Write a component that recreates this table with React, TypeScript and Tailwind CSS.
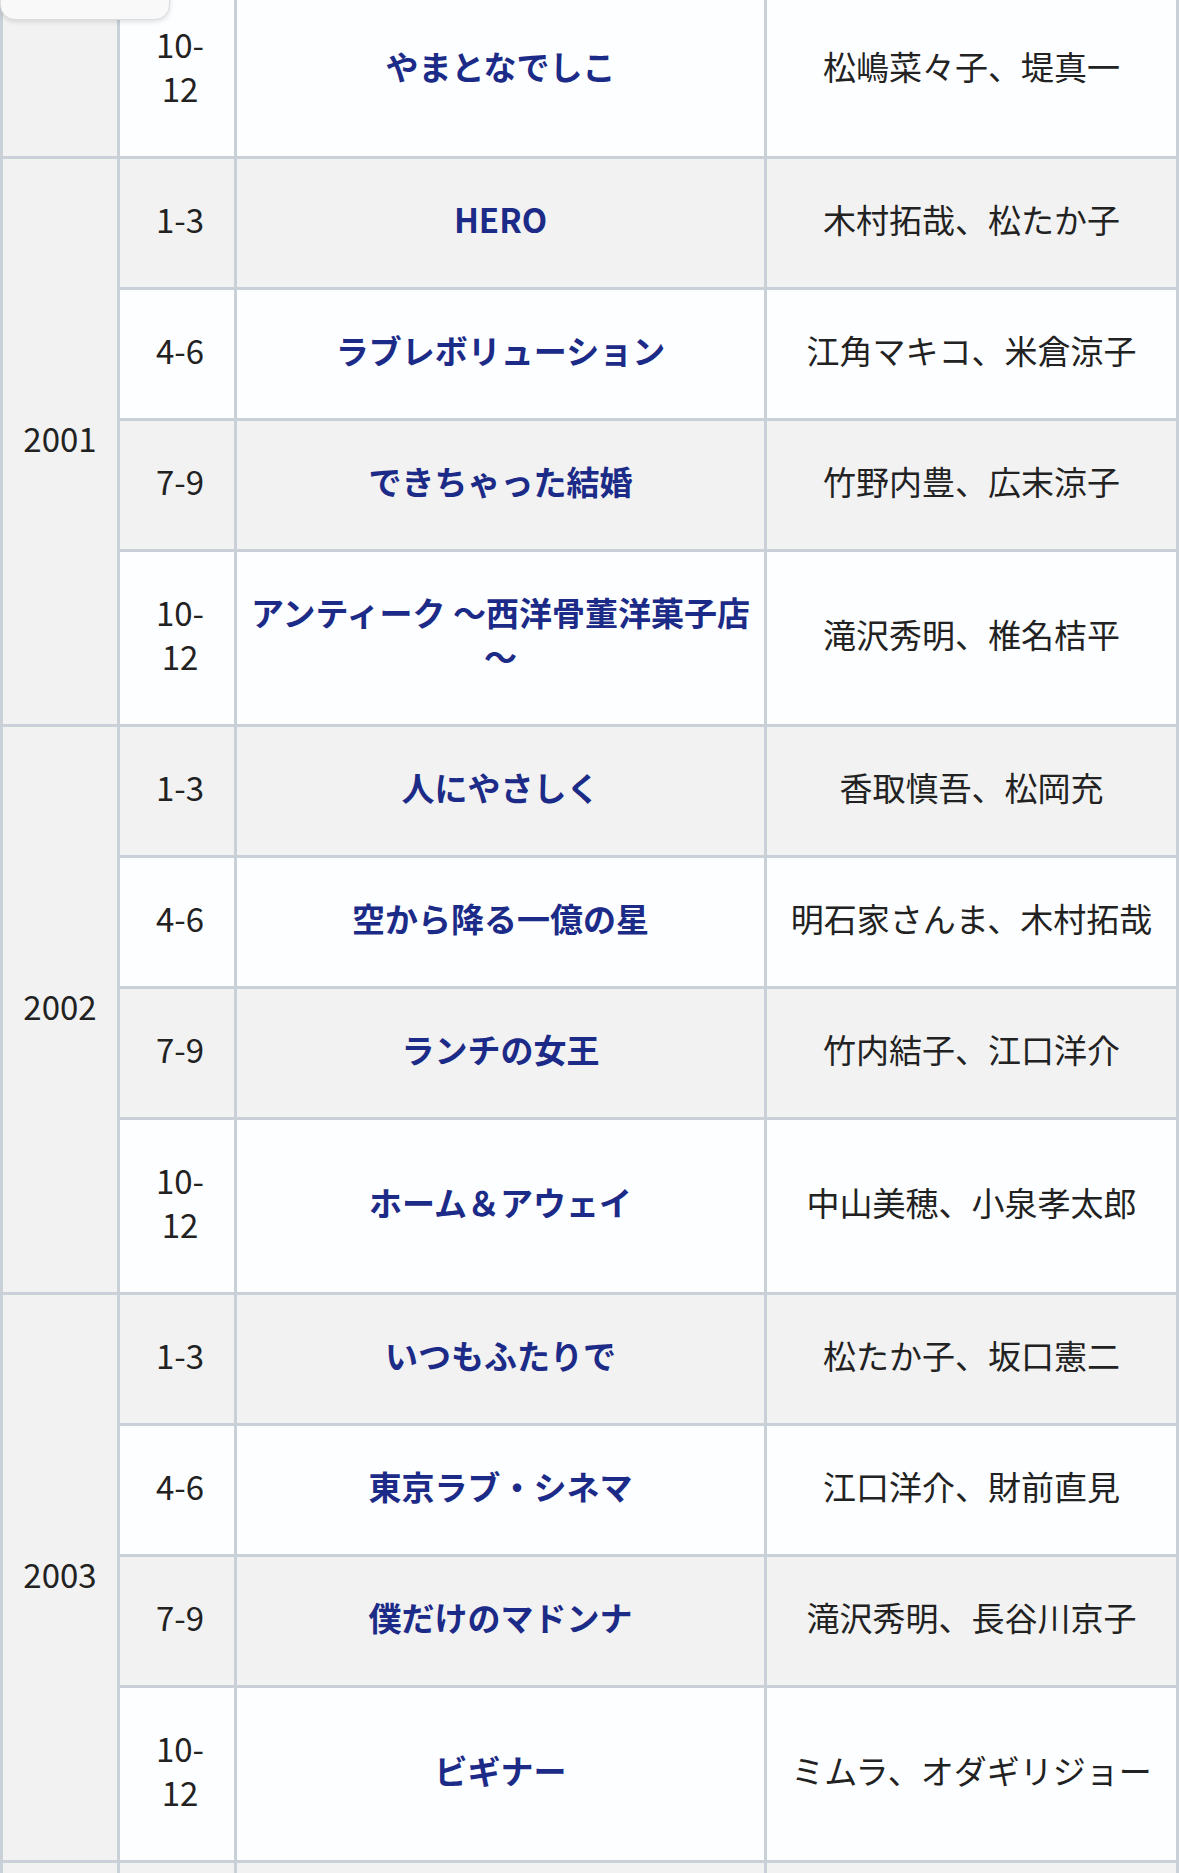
import React from "react";

type Row = { m: string; title: React.ReactNode; cast: string; two?: boolean };

const groups: { year: string; rows: Row[] }[] = [
  {
    year: "2001",
    rows: [
      { m: "1-3", title: "HERO", cast: "木村拓哉、松たか子" },
      { m: "4-6", title: "ラブレボリューション", cast: "江角マキコ、米倉涼子" },
      { m: "7-9", title: "できちゃった結婚", cast: "竹野内豊、広末涼子" },
      {
        m: "10-12",
        title: (
          <>
            アンティーク ～西洋骨董洋菓子店
            <br />～
          </>
        ),
        cast: "滝沢秀明、椎名桔平",
        two: true,
      },
    ],
  },
  {
    year: "2002",
    rows: [
      { m: "1-3", title: "人にやさしく", cast: "香取慎吾、松岡充" },
      { m: "4-6", title: "空から降る一億の星", cast: "明石家さんま、木村拓哉" },
      { m: "7-9", title: "ランチの女王", cast: "竹内結子、江口洋介" },
      { m: "10-12", title: "ホーム＆アウェイ", cast: "中山美穂、小泉孝太郎", two: true },
    ],
  },
  {
    year: "2003",
    rows: [
      { m: "1-3", title: "いつもふたりで", cast: "松たか子、坂口憲二" },
      { m: "4-6", title: "東京ラブ・シネマ", cast: "江口洋介、財前直見" },
      { m: "7-9", title: "僕だけのマドンナ", cast: "滝沢秀明、長谷川京子" },
      { m: "10-12", title: "ビギナー", cast: "ミムラ、オダギリジョー", two: true },
    ],
  },
];

const cellBase =
  "border-[3px] border-[#c9d0d7] text-center align-middle pb-[46px] leading-[44px]";
const firstRow = `${cellBase} border-t-0 pt-[22px]`;
const normal = `${cellBase} pt-[38px]`;

function Month({ m }: { m: string }) {
  if (m === "10-12")
    return (
      <>
        10-
        <br />
        12
      </>
    );
  return <>{m}</>;
}

export default function App() {
  return (
    <div
      className="relative w-[1179px] h-[1873px] overflow-hidden bg-white text-[#222222]"
      style={{ fontFamily: '"Noto Sans CJK JP", "Noto Sans", sans-serif' }}
    >
      <table className="table-fixed border-collapse w-[1179px] text-[33px]">
        <colgroup>
          <col className="w-[117px]" />
          <col className="w-[117px]" />
          <col className="w-[530px]" />
          <col className="w-[412px]" />
        </colgroup>
        <tbody>
          <tr className="bg-[#fdfeff]">
            <td className={`${firstRow} bg-[#f2f2f2]`}></td>
            <td className={`${firstRow} pl-[6px]`}>
              <Month m="10-12" />
            </td>
            <td className={`${firstRow} px-[8px] font-bold text-[#1c2b87]`}>やまとなでしこ</td>
            <td className={`${firstRow} px-[8px]`}>松嶋菜々子、堤真一</td>
          </tr>
          {groups.map((g) =>
            g.rows.map((r, i) => {
              const gray = i % 2 === 0;
              return (
                <tr key={g.year + r.m} className={gray ? "bg-[#f2f2f2]" : "bg-[#fdfeff]"}>
                  {i === 0 && (
                    <td rowSpan={4} className={`${normal} bg-[#f2f2f2] px-[4px]`}>
                      {g.year}
                    </td>
                  )}
                  <td className={`${normal} pl-[6px]`}>
                    <Month m={r.m} />
                  </td>
                  <td className={`${normal} px-[8px] font-bold text-[#1c2b87]`}>{r.title}</td>
                  <td className={`${normal} px-[8px]`}>{r.cast}</td>
                </tr>
              );
            })
          )}
          <tr className="bg-[#f2f2f2]">
            <td className={`${normal} h-[131px]`}></td>
            <td className={`${normal} h-[131px]`}></td>
            <td className={`${normal} h-[131px]`}></td>
            <td className={`${normal} h-[131px]`}></td>
          </tr>
        </tbody>
      </table>
      <div className="absolute left-0 top-[-20px] w-[170px] h-[40px] rounded-[15px] border border-[#dcdcdc] bg-[#f9f9f9] shadow-[0_2px_5px_rgba(0,0,0,0.12)]"></div>
    </div>
  );
}
